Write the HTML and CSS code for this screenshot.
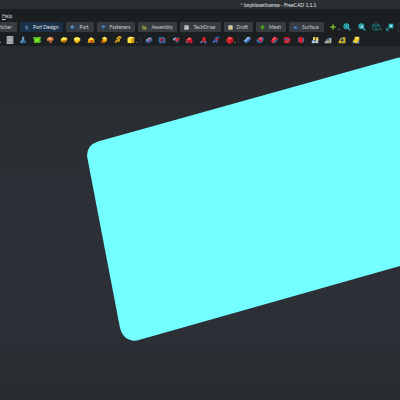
FILE: index.html
```
<!DOCTYPE html>
<html lang="en">
<head>
<meta charset="utf-8">
<title>* boykisserlicense - FreeCAD 1.1.1</title>
<link rel="stylesheet" href="styles.css">
</head>
<body>
<svg class="defs" aria-hidden="true">
  <symbol id="revolve" viewBox="0 0 12 12"><path d="M1 4q5-4 10 0v3L7 11H5L2 8z" fill="#e2ae0c"/><path d="M1 4q5-4 10 0L7 7H4z" fill="#ffec60"/></symbol>
  <symbol id="loft" viewBox="0 0 12 12"><path d="M1 10l1-5 4-3 5 3v5z" fill="#e9a20b"/><path d="M2 5l4-3 4 2-3 3z" fill="#ffe04b"/><path d="M5 7l3-1 1 3-3 1z" fill="#bc3512"/></symbol>
  <symbol id="sweep" viewBox="0 0 12 12"><path d="M1 9l3-3-1-3 4-2 4 3-1 4-5 3z" fill="#edaa09"/><path d="M4 3l3-2 3 2-3 3z" fill="#fff07b"/><path d="M1 9l3-2 3 2-3 2z" fill="#c74113"/></symbol>
  <symbol id="helix" viewBox="0 0 12 12"><path d="M2 10l2-3 3 1 1-3-3-1 3-3 3 2" fill="none" stroke="#e7ae13" stroke-width="2.4"/><path d="M2 7l5 1" stroke="#795d1e"/></symbol>
  <symbol id="box" viewBox="0 0 12 12"><path d="M1 3l4-2 6 1v8l-5 1-5-1z" fill="#d99b08"/><path d="M1 3l5 1v7l-5-1z" fill="#ffe345"/><path d="M1 3l4-2 6 1-5 2z" fill="#fff08a"/></symbol>
  <symbol id="pocket" viewBox="0 0 12 12"><path d="M1 6l6-4 4 2v3l-6 4-4-2z" fill="#3269aa"/><path d="M1 6l6-4 3 2-5 4z" fill="#86aed5"/><path d="M4 6l3-2 2 1-3 3z" fill="#e12631"/></symbol>
  <symbol id="hole" viewBox="0 0 12 12"><path d="M1 2l7-1 3 3v7H3L1 9z" fill="#346aa9"/><path d="M3 4l5-1 1 5-5 1z" fill="#cf1e2a"/><path d="M5 5h2v4H5z" fill="#17365e"/></symbol>
  <symbol id="groove" viewBox="0 0 12 12"><path d="M1 5l4-3 6 1-1 5-4 3-1-4z" fill="#346caa"/><path d="M1 5l4-3 1 2-3 3z" fill="#8db0d4"/><path d="M4 5l3-2 2 1 2-2v3L7 9z" fill="#df242f"/></symbol>
  <symbol id="subloft" viewBox="0 0 12 12"><path d="M1 10l1-5 5-3 4 3v6H7V8l-3 3z" fill="#ce1d2a"/><path d="M3 5l4-3 2 2-3 2z" fill="#ff6568"/><path d="M1 9l3-2v3z" fill="#397aba"/></symbol>
  <symbol id="subsweep" viewBox="0 0 12 12"><path d="M2 9l3-3V2l4-1 1 5 1 4-3 1-2-3-3 3z" fill="#d71f2b"/><path d="M1 9l3-2 2 2-2 2zM8 8h3v3H8z" fill="#3977b7"/></symbol>
  <symbol id="subhelix" viewBox="0 0 12 12"><path d="M1 10l3-3 3 2V5L5 4l3-2h3" fill="none" stroke="#3974b5" stroke-width="2"/><path d="M5 6l3-3 2 2-2 2z" fill="#c92034"/></symbol>
  <symbol id="redbox" viewBox="0 0 12 12"><path d="M1 4l4-3 6 2v6l-5 3-5-3z" fill="#b91422"/><path d="M1 4l4-3 6 2-5 3z" fill="#f04a51"/><path d="M1 4l5 2v6L1 9z" fill="#da2430"/></symbol>
  <symbol id="boolean" viewBox="0 0 12 12"><path d="M1 7l3-2 2-3 4-1 2 4-3 3-2 2-4 1z" fill="#3b72b4"/><path d="M1 7l3-2 2-3 4-1 1 2-4 2-2 3z" fill="#91b7dc"/></symbol>
  <symbol id="fillet" viewBox="0 0 12 12"><path d="M1 6l4-4 5-1 2 4-2 4-5 2-4-2z" fill="#346cab"/><path d="M3 5l3-3 3 1 1 4-4 2z" fill="#db202c"/><path d="M5 3l3-1 1 3-3 1z" fill="#f8646a"/></symbol>
  <symbol id="chamfer" viewBox="0 0 12 12"><path d="M1 8l4-6 4-1 3 3-4 5-4 2z" fill="#d71b29"/><path d="M4 11l4-5 4-2-4 6z" fill="#3f75b2"/><path d="M3 6l3-4 3 0-4 5z" fill="#fa6167"/></symbol>
  <symbol id="draft" viewBox="0 0 12 12"><path d="M1 3l4-2 6 2v6l-4 2-5-1z" fill="#d01d2b"/><path d="M1 5l5-1 5 2-4 1z" fill="#356faf"/><path d="M3 8h5v2H4z" fill="#ee3c45"/></symbol>
  <symbol id="thick" viewBox="0 0 12 12"><path d="M2 2l5-1 4 3-1 5-4 2-4-2z" fill="#d71d2b"/><path d="M2 2h1v7l2 2-3-2zM9 2l2 2-1 5-2 1z" fill="#3971b0"/></symbol>
  <symbol id="mirror" viewBox="0 0 12 12"><path d="M1 11V7l4-2v6zM7 11V5h4v6z" fill="#74a6da"/><path d="M3 2l3-1v5H3zM7 2h4v5H7z" fill="#e8d35a"/><path d="M2 8h8v2H2z" fill="#dbe3e8"/></symbol>
  <symbol id="linear" viewBox="0 0 12 12"><path d="M1 8h3v3H1zM4 6h3v5H4zM8 3h3v8H8z" fill="#a9b9b3"/><path d="M2 6l7-4v2L4 8z" fill="#5680a7"/><path d="M5 8h3v2H5z" fill="#c8c451"/></symbol>
  <symbol id="polar" viewBox="0 0 12 12"><path d="M1 8l2-2 2 1v4H1zM7 2h4v9H7z" fill="#d9bb23"/><path d="M2 6q1-4 5-4v2L4 6z" fill="#8d9e60"/><path d="M5 8h3v3H5z" fill="#b6a83a"/><path d="M7 5h2v3H7z" fill="#4a657d"/></symbol>
  <symbol id="multi" viewBox="0 0 12 12"><path d="M4 1h7v6H9v4H4V9H1l2-4h1z" fill="#efcf29"/><path d="M1 9h3v2H1zM8 8h3v3H8z" fill="#6fa1d0"/><path d="M6 2h3v2H6z" fill="#fff290"/></symbol>
  <symbol id="sheet" viewBox="0 0 12 12"><path d="M1 0h10v12H1z" fill="#a5afb5"/><path d="M3 3h6v6H3z" fill="none" stroke="#7d878f"/><path d="M4 6h4" stroke="#dfe4e7"/></symbol>
  <symbol id="datum" viewBox="0 0 12 12"><path d="M5 1h3v4l3 5-3 1H2l-1-2 4-3z" fill="#356ba8"/><path d="M5 1h2v5l-3 3-2 0 3-3z" fill="#8fb0d6"/></symbol>
  <symbol id="binder" viewBox="0 0 12 12"><path d="M1 1l4 1 3-1 4 1-1 4 1 3-3 2-3-1-3 1-2-2 1-3-2-2z" fill="#55bd1d"/><path d="M3 4l3 1 4-3-2 5-4 2z" fill="#91f532"/></symbol>
  <symbol id="clone" viewBox="0 0 12 12"><path d="M1 4l4-3 5 1 2 4-3 1v3l-4 1V7L2 8z" fill="#d17540"/><path d="M3 4l3-2 3 2-3 2z" fill="#f6b679"/><path d="M5 7l3 0v3H5z" fill="#8b4730"/></symbol>
  <symbol id="disc" viewBox="0 0 12 12"><path d="M1 5l4-3 6 1v3L7 10 3 9 1 8z" fill="#dfa005"/><path d="M1 5l4-3 6 1-4 4z" fill="#ffec5c"/><path d="M4 8l4-2v2l-2 2z" fill="#c0471b"/></symbol>
  <symbol id="gear" viewBox="0 0 12 12"><path d="M6 1l4 4-3 6-4-5z" fill="none" stroke="#5792cd" stroke-width="1.7"/><path d="M6 4v4" stroke="#d5e3ee"/></symbol>
  <symbol id="part" viewBox="0 0 12 12"><path d="M1 4l5-3 5 2v5l-6 3-4-3z" fill="#2861a5"/><path d="M1 4l5-3 2 3-3 3z" fill="#83acd7"/></symbol>
  <symbol id="bolt" viewBox="0 0 12 12"><path d="M1 2l4-1 6 1v3l-4 2-1 4H4V7L1 5z" fill="#2e66aa"/><path d="M2 3h7" stroke="#86b2df" stroke-width="1.5"/></symbol>
  <symbol id="assembly" viewBox="0 0 12 12"><path d="M5 1L2 3v6l4 2 4-2V7H6V5h3" fill="none" stroke="#c7c938" stroke-width="2"/></symbol>
  <symbol id="drawing" viewBox="0 0 12 12"><path d="M1 1h10v10H1z" fill="#dce1e3"/><path d="M3 4h3v3H3zM8 4v4" fill="none" stroke="#67747c"/></symbol>
  <symbol id="drafting" viewBox="0 0 12 12"><path d="M1 1h10v10H1z" fill="#e3e4d4"/><path d="M3 9l1-4 3-2 2 6z" fill="#c6b223"/></symbol>
  <symbol id="mesh" viewBox="0 0 12 12"><path d="M0 5l6-5 6 5-4 3v4H4V8z" fill="#3d9417"/><path d="M3 5h6M6 2v7" stroke="#62c622"/></symbol>
  <symbol id="surface" viewBox="0 0 12 12"><path d="M1 3l5 1 5-2-2 4 2 4-6-1-4 1 2-4z" fill="#286bb7"/><path d="M2 4l5 1-2 3z" fill="#77b6ee"/></symbol>
  <symbol id="plus" viewBox="0 0 12 12"><path d="M6 2v8M2 6h8" stroke="#79bd27" stroke-width="2"/></symbol>
  <symbol id="fit" viewBox="0 0 12 12"><circle cx="5" cy="5" r="3.500" fill="#155d65" stroke="#25a9b2" stroke-width="2"/><path d="M7 7l4 4" stroke="#2aabb3" stroke-width="2"/><path d="M3 5h4M5 3v4" stroke="#76dadd"/></symbol>
  <symbol id="fitsel" viewBox="0 0 12 12"><circle cx="5" cy="5" r="3.500" fill="#168690" stroke="#25a9b2" stroke-width="2"/><path d="M7 7l4 4" stroke="#2aabb3" stroke-width="2"/><path d="M4 4h3v3H4z" fill="#c9f1ef"/></symbol>
  <symbol id="cube" viewBox="0 0 12 12"><path d="M1 3l5-2 5 2v6l-5 2-5-2zM1 3l5 2 5-2M6 5v6" fill="none" stroke="#187f8a" stroke-width="1.300"/></symbol>
  <symbol id="align" viewBox="0 0 12 12"><path d="M4 1h7v7H4z" fill="#2aaeb7"/><path d="M6 3h3v3H6z" fill="#a4e4e4"/><path d="M5 7l-4 4M1 7v4h3" fill="none" stroke="#249aa4" stroke-width="1.5"/></symbol>
</svg>
<div class="app">
  <header class="title">* boykisserlicense - FreeCAD 1.1.1</header>
  <nav class="menu"><button type="button"><u>H</u>elp</button></nav>
  <div class="workbenches">
    <button class="tab tab-cut" type="button">tcher</button>
    <button class="tab tab-active" type="button"><svg><use href="#gear"/></svg>Part Design</button>
    <button class="tab" type="button"><svg><use href="#part"/></svg>Part</button>
    <button class="tab" type="button"><svg><use href="#bolt"/></svg>Fasteners</button>
    <button class="tab" type="button"><svg><use href="#assembly"/></svg>Assembly</button>
    <button class="tab" type="button"><svg><use href="#drawing"/></svg>TechDraw</button>
    <button class="tab" type="button"><svg><use href="#drafting"/></svg>Draft</button>
    <button class="tab" type="button"><svg><use href="#mesh"/></svg>Mesh</button>
    <button class="tab" type="button"><svg><use href="#surface"/></svg>Surface</button>
    <div class="view-tools">
      <button class="tool more" type="button" aria-label="Add"><svg><use href="#plus"/></svg></button>
      <button class="tool" type="button" aria-label="Fit all"><svg><use href="#fit"/></svg></button>
      <button class="tool" type="button" aria-label="Fit selection"><svg><use href="#fitsel"/></svg></button>
      <button class="tool more" type="button" aria-label="Isometric"><svg><use href="#cube"/></svg></button>
      <button class="tool" type="button" aria-label="Align view"><svg><use href="#align"/></svg></button>
    </div>
  </div>
  <div class="tools">
    <span class="edge"></span>
    <div class="group group-add">
      <button class="tool" type="button" aria-label="Sketch"><svg><use href="#sheet"/></svg></button>
      <button class="tool" type="button" aria-label="Datum"><svg><use href="#datum"/></svg></button>
      <button class="tool" type="button" aria-label="Shape binder"><svg><use href="#binder"/></svg></button>
      <button class="tool" type="button" aria-label="Clone"><svg><use href="#clone"/></svg></button>
      <button class="tool" type="button" aria-label="Pad"><svg><use href="#disc"/></svg></button>
      <button class="tool" type="button" aria-label="Revolution"><svg><use href="#revolve"/></svg></button>
      <button class="tool" type="button" aria-label="Loft"><svg><use href="#loft"/></svg></button>
      <button class="tool" type="button" aria-label="Pipe"><svg><use href="#sweep"/></svg></button>
      <button class="tool" type="button" aria-label="Helix"><svg><use href="#helix"/></svg></button>
      <button class="tool more" type="button" aria-label="Primitive"><svg><use href="#box"/></svg></button>
    </div>
    <div class="group group-cut">
      <button class="tool" type="button" aria-label="Pocket"><svg><use href="#pocket"/></svg></button>
      <button class="tool" type="button" aria-label="Hole"><svg><use href="#hole"/></svg></button>
      <button class="tool" type="button" aria-label="Groove"><svg><use href="#groove"/></svg></button>
      <button class="tool" type="button" aria-label="Subtractive loft"><svg><use href="#subloft"/></svg></button>
      <button class="tool" type="button" aria-label="Subtractive pipe"><svg><use href="#subsweep"/></svg></button>
      <button class="tool" type="button" aria-label="Subtractive helix"><svg><use href="#subhelix"/></svg></button>
      <button class="tool more" type="button" aria-label="Subtractive primitive"><svg><use href="#redbox"/></svg></button>
    </div>
    <div class="group group-dress">
      <button class="tool" type="button" aria-label="Boolean"><svg><use href="#boolean"/></svg></button>
      <button class="tool" type="button" aria-label="Fillet"><svg><use href="#fillet"/></svg></button>
      <button class="tool" type="button" aria-label="Chamfer"><svg><use href="#chamfer"/></svg></button>
      <button class="tool" type="button" aria-label="Draft face"><svg><use href="#draft"/></svg></button>
      <button class="tool" type="button" aria-label="Thickness"><svg><use href="#thick"/></svg></button>
      <button class="tool" type="button" aria-label="Mirror"><svg><use href="#mirror"/></svg></button>
      <button class="tool" type="button" aria-label="Linear pattern"><svg><use href="#linear"/></svg></button>
      <button class="tool" type="button" aria-label="Polar pattern"><svg><use href="#polar"/></svg></button>
      <button class="tool" type="button" aria-label="Multi transform"><svg><use href="#multi"/></svg></button>
    </div>
  </div>
  <main class="viewport">
    <svg viewBox="0 46 400 354" preserveAspectRatio="xMinYMin slice">
      <path d="M400 57.500L397 58L98 141.500Q87 145 87 156L120 328Q124 342 137 340.500L400 266z" fill="#73ffff"/>
    </svg>
  </main>
</div>
</body>
</html>
```
FILE: styles.css
```
* {
  box-sizing: border-box;
}

body {
  margin: 0;
  background: #1b1f22;
  color: #cdd1d4;
  font: 5px/8px Lato, "Noto Sans", sans-serif;
}

button {
  padding: 0;
  border: 0;
  background: none;
  color: inherit;
  font: inherit;
}

.defs {
  position: absolute;
  width: 0;
  height: 0;
}

.app {
  display: flex;
  flex-direction: column;
  height: 100vh;
}

.title {
  height: 9px;
  padding-left: 157px;
  background: #2a2f33;
  color: #e4e6e7;
  line-height: 10px;
  text-align: center;
}

.menu {
  display: flex;
  align-items: center;
  height: 13px;
  padding-left: 2px;
}

.workbenches {
  display: flex;
  gap: 3px;
  height: 10px;
}

.tab {
  display: flex;
  align-items: center;
  justify-content: center;
  gap: 4px;
  padding: 0 5px 0 4px;
  border-radius: 1px;
  background: #373c40;
  white-space: nowrap;
}

.tab svg {
  width: 5px;
  height: 5px;
}

.tab-cut {
  width: 17px;
  padding: 0 5px 0 0;
}

.tab-active {
  background: #1b3148;
  color: #e2e7ec;
}

.view-tools {
  display: flex;
  flex: 1;
  align-items: center;
  justify-content: space-between;
  max-width: 70px;
  margin-left: 2px;
  padding-right: 3px;
  border-right: 1px solid #2b3034;
}

.tool {
  position: relative;
  display: flex;
  width: 9px;
  height: 8px;
  justify-content: center;
}

.tool svg {
  width: 8px;
  height: 8px;
}

.more::after {
  position: absolute;
  right: -2px;
  bottom: 0;
  border: 1px solid transparent;
  border-top-color: #a4a8aa;
  content: "";
}

.tools {
  display: flex;
  align-items: center;
  gap: 4px;
  height: 14px;
  padding-top: 2px;
}

.edge {
  width: 1px;
  height: 1px;
  margin-top: 5px;
  background: #8799a6;
}

.group {
  display: flex;
  justify-content: space-between;
}

.group-add {
  width: 131px;
}

.group-cut,
.group-dress {
  padding-left: 3px;
  border-left: 1px solid #2b3034;
}

.group-cut {
  width: 94px;
}

.group-dress {
  width: 122px;
}

.viewport {
  flex: 1;
  min-height: 0;
  background: linear-gradient(#272b30, #2d3137 50%, #2c3036 80%, #272c31);
}

.viewport svg {
  display: block;
  width: 100%;
  height: 100%;
}
```
